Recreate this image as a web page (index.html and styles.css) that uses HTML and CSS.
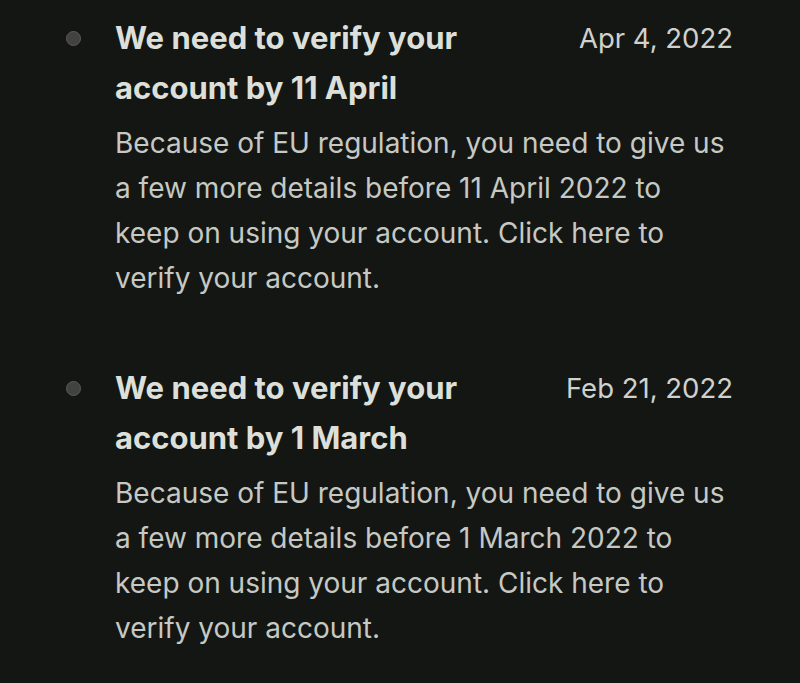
FILE: index.html
```html
<!DOCTYPE html>
<html lang="en">
<head>
    <meta charset="UTF-8">
    <meta name="viewport" content="width=device-width, initial-scale=1.0">
    <title>Notifications</title>
    <link rel="stylesheet" href="styles.css">
</head>
<body>
    <ul class="notes">
        <li class="note">
            <span class="dot"></span>
            <div class="content">
                <div class="head">
                    <h2 class="title">We need to verify your account by 11 April</h2>
                    <span class="date">Apr 4, 2022</span>
                </div>
                <p class="text">Because of EU regulation, you need to give us a few more details before 11 April 2022 to keep on using your account. Click here to verify your account.</p>
            </div>
        </li>
        <li class="note">
            <span class="dot"></span>
            <div class="content">
                <div class="head">
                    <h2 class="title">We need to verify your account by 1 March</h2>
                    <span class="date">Feb 21, 2022</span>
                </div>
                <p class="text">Because of EU regulation, you need to give us a few more details before 1 March 2022 to keep on using your account. Click here to verify your account.</p>
            </div>
        </li>
    </ul>
</body>
</html>
```

FILE: styles.css
```css
body {
    margin: 0;
    background-color: #141614;
    font-family: Inter, "Noto Sans", sans-serif;
    color: #dcdfd9;
}

.notes {
    list-style: none;
    margin: 0;
    padding: 13px 67px 0 66px;
}

.note {
    display: flex;
    gap: 34px;
    margin-bottom: 62px;
}

.dot {
    flex: none;
    width: 13px;
    height: 13px;
    margin-top: 18px;
    border-radius: 50%;
    background-color: #424341;
    border: 1px solid #5a5b58;
}

.content {
    flex: 1;
}

.head {
    display: flex;
    justify-content: space-between;
    gap: 30px;
}

.title {
    margin: 0;
    max-width: 420px;
    font-size: 31px;
    line-height: 50px;
    font-weight: 700;
    color: #dde0da;
}

.date {
    flex: none;
    white-space: nowrap;
    font-size: 27.5px;
    line-height: 50px;
    color: #cfd2cc;
}

.text {
    margin: 8px 0 0;
    font-size: 28px;
    line-height: 45px;
    color: #c6c9c3;
}
```
